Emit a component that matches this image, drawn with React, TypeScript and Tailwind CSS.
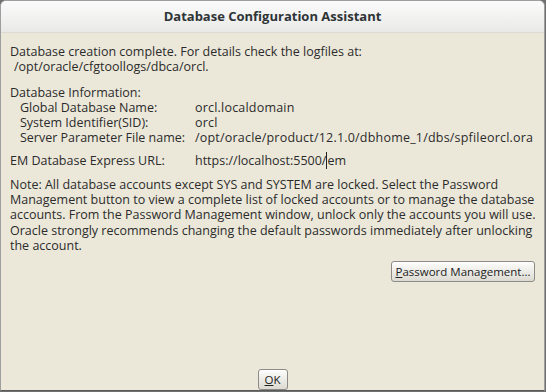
import React from 'react';

const rows = [
  { label: 'Global Database Name:', value: 'orcl.localdomain' },
  { label: 'System Identifier(SID):', value: 'orcl' },
  { label: 'Server Parameter File name:', value: '/opt/oracle/product/12.1.0/dbhome_1/dbs/spfileorcl.ora' },
];

const note = [
  'Note: All database accounts except SYS and SYSTEM are locked. Select the Password',
  'Management button to view a complete list of locked accounts or to manage the database',
  'accounts. From the Password Management window, unlock only the accounts you will use.',
  'Oracle strongly recommends changing the default passwords immediately after unlocking',
  'the account.',
];

function Btn({ children, className = '' }: { children: React.ReactNode; className?: string }) {
  return (
    <button
      className={`whitespace-nowrap rounded-[3px] border border-[#8c8b86] bg-gradient-to-b from-[#fdfdfc] to-[#dcdad2] px-0 text-[11.5px] leading-none text-[#222] shadow-[inset_0_1px_0_#fff] ${className}`}
    >
      {children}
    </button>
  );
}

export default function App() {
  return (
    <div className="h-[392px] w-[546px] bg-[#6f6f6f] font-['Open_Sans',sans-serif]">
      <div className="flex h-[391px] w-[545px] flex-col overflow-hidden rounded-t-[6px] border border-[#9e9e9e] border-b-[#5a5a5a] bg-[#ebe8da]">
        <div className="flex h-[32px] shrink-0 items-center justify-center border-b border-[#dcdad2] bg-gradient-to-b from-[#fbfbfb] to-[#e9e9e8] text-[13px] font-bold text-[#2e3436]">
          Database Configuration Assistant
        </div>

        <div className="flex flex-1 flex-col px-[9px] pt-[11px] text-[12.5px] leading-[15px] text-[#2b2b2b]">
          <p>Database creation complete. For details check the logfiles at:</p>
          <p className="pl-[4px]">/opt/oracle/cfgtoollogs/dbca/orcl.</p>

          <p className="mt-[11px]">Database Information:</p>
          {rows.map(r => (
            <div key={r.label} className="flex">
              <span className="w-[185px] shrink-0 pl-[10px]">{r.label}</span>
              <span className="whitespace-nowrap tracking-[0.2px]">{r.value}</span>
            </div>
          ))}

          <div className="mt-[8px] flex">
            <span className="w-[185px] shrink-0">EM Database Express URL:</span>
            <span>
              https://localhost:5500/<span className="border-l border-[#222]">em</span>
            </span>
          </div>

          <div className="mt-[9px] leading-[15.2px]">
            {note.map(l => (
              <p key={l} className="whitespace-nowrap">{l}</p>
            ))}
          </div>

          <div className="mt-[8px] flex justify-end">
            <Btn className="h-[21px] w-[144px]">
              <span className="underline">P</span>assword Management...
            </Btn>
          </div>

          <div className="mt-auto flex justify-center">
            <Btn className="h-[21px] w-[30px]">
              <span className="underline">O</span>K
            </Btn>
          </div>
        </div>
      </div>
    </div>
  );
}
